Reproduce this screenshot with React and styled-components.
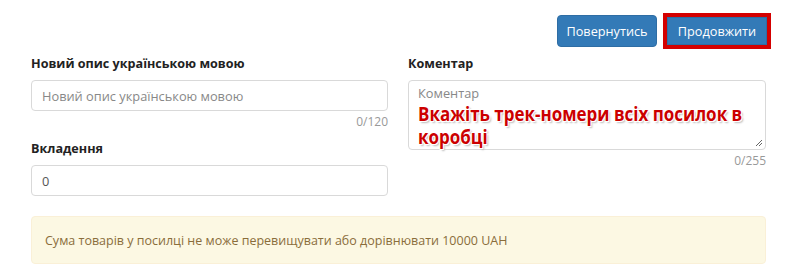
import React from "react";
import styled, { createGlobalStyle } from "styled-components";

const Global = createGlobalStyle`
  html, body { margin: 0; padding: 0; background: #fff; }
  body { font-family: "Open Sans", "Noto Sans", sans-serif; color: #333; font-size: 13px; }
  * { box-sizing: border-box; }
`;

const Page = styled.div`
  width: 800px;
  padding: 15px 34px 0 31px;
`;

const Toolbar = styled.div`
  display: flex;
  justify-content: flex-end;
  align-items: center;
  gap: 6px;
  height: 32px;
  margin-right: -5px;
`;

const Button = styled.button`
  width: 100px;
  height: 32px;
  padding: 0;
  font-family: inherit;
  font-size: 12.7px;
  color: #fff;
  background: #337ab7;
  border: 1px solid #2e6da4;
  border-radius: 4px;
  ${(p) =>
    p.$highlight
      ? "height: 28px; margin: 0 4px; border-radius: 0; outline: 4px solid #d40000; outline-offset: 0;"
      : ""}
`;

const Grid = styled.div`
  display: grid;
  grid-template-columns: 357px 358px;
  column-gap: 20px;
  margin-top: 7px;
`;

const Column = styled.div`
  display: flex;
  flex-direction: column;
`;

const Label = styled.div`
  font-weight: 700;
  font-size: 12.6px;
  color: #222;
  height: 20px;
  line-height: 20px;
  margin-top: ${(p) => p.$top || 0}px;
  margin-bottom: 6px;
`;

const Input = styled.div`
  height: 31px;
  border: 1px solid #d9d9d9;
  border-radius: 4px;
  padding: 0 10px;
  display: flex;
  align-items: center;
  font-size: 12.8px;
  color: ${(p) => (p.$placeholder ? "#888" : "#555")};
`;

const TextArea = styled.div`
  position: relative;
  height: 70px;
  border: 1px solid #d9d9d9;
  border-radius: 4px;
  padding: 3px 9px;
  font-size: 12.8px;
  line-height: 18px;
  color: #888;
`;

const Grip = styled.svg`
  position: absolute;
  right: 2px;
  bottom: 2px;
`;

const Annotation = styled.div`
  position: absolute;
  left: 9px;
  top: 21px;
  width: 400px;
  transform: scaleX(0.87);
  transform-origin: left top;
  font-size: 19.5px;
  font-weight: 700;
  line-height: 23px;
  color: #cc0000;
  text-shadow: 1px 1px 0 #fff, -1px -1px 0 #fff, 1px -1px 0 #fff, -1px 1px 0 #fff, 2px 2px 2px #bbb;
`;

const Counter = styled.div`
  text-align: right;
  font-size: 12px;
  color: #999;
  height: 22px;
  line-height: 22px;
`;

const Alert = styled.div`
  margin-top: 20px;
  height: 48px;
  background: #fcf8e3;
  border: 1px solid #faf0d7;
  border-radius: 4px;
  padding: 0 13px;
  display: flex;
  align-items: center;
  color: #8a6d3b;
  font-size: 12.5px;
`;

export default function App() {
  return (
    <Page>
      <Global />
      <Toolbar>
        <Button>Повернутись</Button>
        <Button $highlight>Продовжити</Button>
      </Toolbar>
      <Grid>
        <Column>
          <Label>Новий опис українською мовою</Label>
          <Input $placeholder>Новий опис українською мовою</Input>
          <Counter>0/120</Counter>
          <Label $top={6}>Вкладення</Label>
          <Input>0</Input>
        </Column>
        <Column>
          <Label>Коментар</Label>
          <TextArea>
            Коментар
            <Annotation>Вкажіть трек-номери всіх посилок в коробці</Annotation>
            <Grip width="9" height="9" viewBox="0 0 9 9">
              <path d="M8 2 L2 8 M8 5 L5 8" stroke="#666" strokeWidth="1" />
            </Grip>
          </TextArea>
          <Counter>0/255</Counter>
        </Column>
      </Grid>
      <Alert>Сума товарів у посилці не може перевищувати або дорівнювати 10000 UAH</Alert>
    </Page>
  );
}
